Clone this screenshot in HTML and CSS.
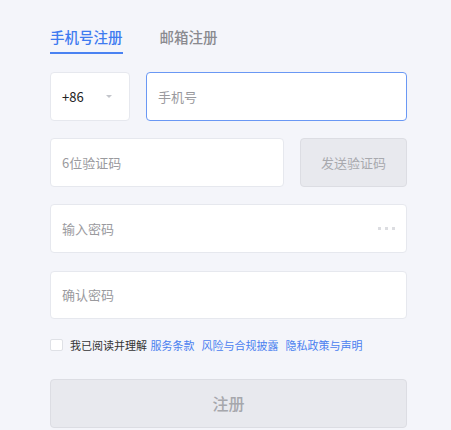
FILE: index.html
```html
<!DOCTYPE html>
<html lang="zh">
<head>
<meta charset="utf-8">
<link rel="stylesheet" href="styles.css">
</head>
<body>
<div class="form">
  <div class="tabs">
    <div class="tab active">手机号注册</div>
    <div class="tab">邮箱注册</div>
  </div>
  <div class="row">
    <div class="field select"><span class="code">+86</span><span class="caret"></span></div>
    <div class="field grow focus"><span class="ph">手机号</span></div>
  </div>
  <div class="row">
    <div class="field grow"><span class="ph">6位验证码</span></div>
    <div class="send">发送验证码</div>
  </div>
  <div class="row">
    <div class="field grow between"><span class="ph">输入密码</span><span class="dots"><i></i><i></i><i></i></span></div>
  </div>
  <div class="row">
    <div class="field grow"><span class="ph">确认密码</span></div>
  </div>
  <div class="agree">
    <span class="box"></span>
    <span class="txt">我已阅读并理解</span>
    <a class="link">服务条款</a>
    <a class="link">风险与合规披露</a>
    <a class="link">隐私政策与声明</a>
  </div>
  <div class="submit">注册</div>
</div>
</body>
</html>
```
FILE: styles.css
```css
* { box-sizing: border-box; }
html, body { margin: 0; padding: 0; }
body {
  background: #f4f5fa;
  font-family: "Noto Sans CJK SC", "Noto Sans", sans-serif;
  width: 451px;
  height: 430px;
  overflow: hidden;
}
.form {
  margin-left: 50px;
  width: 357px;
  padding-top: 27px;
}
.tabs {
  display: flex;
  gap: 37px;
  margin-bottom: 18px;
}
.tab {
  font-size: 14.5px;
  line-height: 20px;
  font-weight: 500;
  color: #8a8a8f;
  padding-bottom: 5px;
  border-bottom: 2px solid transparent;
}
.tab.active {
  color: #3f7bf0;
  border-bottom-color: #4a82f2;
}
.row {
  display: flex;
  gap: 16px;
  height: 48.5px;
  margin-bottom: 17.7px;
}
.field {
  background: #fff;
  border: 1px solid #e6e8ee;
  border-radius: 4px;
  display: flex;
  align-items: center;
  padding: 0 11px;
  font-size: 13px;
}
.grow { flex: 1; }
.between { justify-content: space-between; }
.focus { border-color: #6a98f4; }
.select {
  width: 80px;
  justify-content: space-between;
  padding-right: 17px;
}
.code { color: #222; font-size: 13px; }
.caret {
  width: 0; height: 0;
  border-left: 3px solid transparent;
  border-right: 3px solid transparent;
  border-top: 3px solid #c3c5cb;
}
.ph { color: #9a9a9e; }
.dots { display: flex; gap: 3.7px; }
.dots i {
  display: block;
  width: 3.3px; height: 3.3px;
  background: #dcdde1;
}
.send {
  width: 107px;
  background: #e8e9ee;
  border: 1px solid #dcdde3;
  border-radius: 4px;
  color: #a8a9ae;
  font-size: 13px;
  display: flex;
  align-items: center;
  justify-content: center;
}
.agree {
  display: flex;
  align-items: center;
  font-size: 11px;
  height: 14px;
  margin-top: 19px;
  margin-bottom: 27px;
}
.box {
  width: 12.5px; height: 12.5px;
  border: 1px solid #dfe1e6;
  background: #fff;
  border-radius: 2px;
  margin-right: 7.5px;
}
.txt { color: #333; margin-right: 3.5px; }
.link { color: #4a80f0; margin-right: 7px; }
.submit {
  height: 48.5px;
  background: #e8e9ee;
  border: 1px solid #dcdde3;
  border-radius: 4px;
  color: #a6a7ac;
  font-size: 16px;
  font-weight: 500;
  display: flex;
  align-items: center;
  justify-content: center;
}
```
